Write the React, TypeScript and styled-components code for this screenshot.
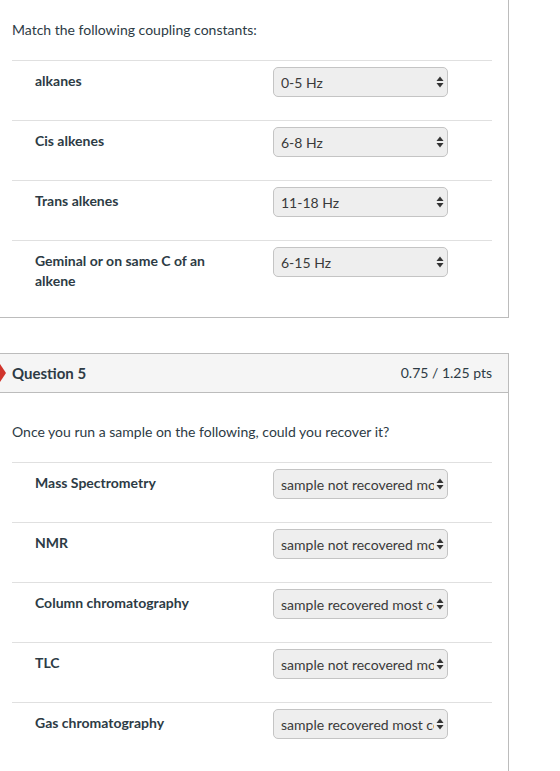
import React from 'react';
import styled, { createGlobalStyle } from 'styled-components';

const GlobalStyle = createGlobalStyle`
  html, body {
    margin: 0;
    padding: 0;
    background: #ffffff;
  }
  body {
    font-family: Lato, "Helvetica Neue", "Liberation Sans", Arial, sans-serif;
    color: #2d3b45;
    overflow: hidden;
  }
`;

const Page = styled.main`
  width: 510px;
  margin-left: -1px;
  display: flex;
  flex-direction: column;
  gap: 35px;
`;

const Card = styled.section<{ $continued?: boolean }>`
  border: 1px solid #bcbcbc;
  border-top: ${(p) => (p.$continued ? 'none' : '1px solid #bcbcbc')};
  background: #ffffff;
`;

const Header = styled.header`
  position: relative;
  height: 38px;
  display: flex;
  align-items: center;
  justify-content: space-between;
  padding: 0 16px 0 12px;
  background: #f5f5f5;
  border-bottom: 1px solid #bcbcbc;
`;

const Marker = styled.svg`
  position: absolute;
  left: -10px;
  top: 50%;
  transform: translateY(-50%);
`;

const Title = styled.h2`
  margin: 0;
  font-size: 15px;
  font-weight: 700;
  line-height: 20px;
  color: #2d3b45;
`;

const Points = styled.span`
  font-size: 14px;
  line-height: 20px;
  color: #2d3b45;
`;

const Body = styled.div<{ $top: number; $bottom: number }>`
  padding: ${(p) => p.$top}px 16px ${(p) => p.$bottom}px 12px;
`;

const Prompt = styled.p`
  margin: 0 0 18px;
  font-size: 14px;
  line-height: 24px;
  color: #2d3b45;
`;

const Row = styled.div`
  display: flex;
  align-items: flex-start;
  border-top: 1px solid #e0e0e0;
  padding: 6px 0 23px 23px;
`;

const Label = styled.div`
  flex: 0 0 200px;
  margin-right: 38px;
  padding-top: 4px;
  font-size: 14px;
  font-weight: 700;
  line-height: 20px;
  color: #2d3b45;
`;

const SelectWrap = styled.span`
  position: relative;
  display: inline-block;
  width: 175px;
  height: 30px;
`;

const Select = styled.select`
  appearance: none;
  -webkit-appearance: none;
  box-sizing: border-box;
  width: 100%;
  height: 100%;
  margin: 0;
  padding: 1px 13px 0 7px;
  font-family: Lato, "Helvetica Neue", "Liberation Sans", Arial, sans-serif;
  font-size: 14px;
  color: #3a3a3a;
  background: #eeeeee;
  border: 1px solid #c4c4c4;
  border-radius: 5px;
  outline: none;
`;

const Arrows = styled.svg`
  position: absolute;
  right: 4px;
  top: 50%;
  transform: translateY(-50%);
  pointer-events: none;
`;

type Item = { label: string; value: string };

const first: Item[] = [
  { label: 'alkanes', value: '0-5 Hz' },
  { label: 'Cis alkenes', value: '6-8 Hz' },
  { label: 'Trans alkenes', value: '11-18 Hz' },
  { label: 'Geminal or on same C of an alkene', value: '6-15 Hz' },
];

const second: Item[] = [
  { label: 'Mass Spectrometry', value: 'sample not recovered most commonly' },
  { label: 'NMR', value: 'sample not recovered most commonly' },
  { label: 'Column chromatography', value: 'sample recovered most commonly' },
  { label: 'TLC', value: 'sample not recovered most commonly' },
  { label: 'Gas chromatography', value: 'sample recovered most commonly' },
];

const Dropdown: React.FC<{ value: string }> = ({ value }) => (
  <SelectWrap>
    <Select value={value} onChange={() => undefined}>
      <option value={value}>{value}</option>
    </Select>
    <Arrows width="8" height="13" viewBox="0 0 8 13">
      <polygon points="4,1 7.5,5.5 0.5,5.5" fill="#333" />
      <polygon points="0.5,7.5 7.5,7.5 4,12" fill="#333" />
    </Arrows>
  </SelectWrap>
);

const Answers: React.FC<{ items: Item[] }> = ({ items }) => (
  <>
    {items.map((it) => (
      <Row key={it.label}>
        <Label>{it.label}</Label>
        <Dropdown value={it.value} />
      </Row>
    ))}
  </>
);

export default function App() {
  return (
    <>
      <GlobalStyle />
      <Page>
        <Card $continued>
          <Body $top={18} $bottom={3}>
            <Prompt>Match the following coupling constants:</Prompt>
            <Answers items={first} />
          </Body>
        </Card>
        <Card>
          <Header>
            <Marker width="16" height="18" viewBox="0 0 16 18">
              <polygon points="0,0 10,0 16,9 10,18 0,18" fill="#d0342c" />
            </Marker>
            <Title>Question 5</Title>
            <Points>0.75 / 1.25 pts</Points>
          </Header>
          <Body $top={27} $bottom={30}>
            <Prompt>Once you run a sample on the following, could you recover it?</Prompt>
            <Answers items={second} />
          </Body>
        </Card>
      </Page>
    </>
  );
}
